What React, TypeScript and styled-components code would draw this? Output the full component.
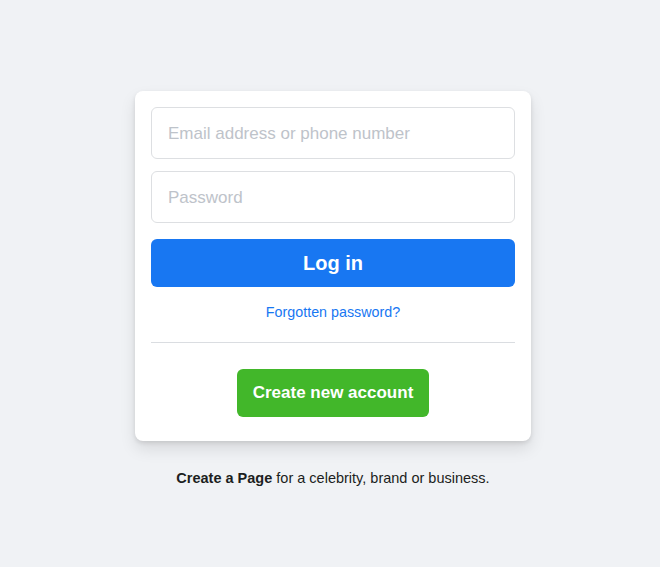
import React from 'react'
import styled, { createGlobalStyle } from 'styled-components'

const GlobalStyle = createGlobalStyle`
  html, body {
    margin: 0;
    padding: 0;
    background: #f0f2f5;
    font-family: "Liberation Sans", Arial, Helvetica, sans-serif;
  }
`

const Page = styled.div`
  min-height: 567px;
  box-sizing: border-box;
  padding: 91px 0 0 6px;
  display: flex;
  flex-direction: column;
  align-items: center;
`

const Card = styled.form`
  width: 396px;
  box-sizing: border-box;
  background: #fff;
  border-radius: 8px;
  box-shadow: 0 2px 4px rgba(0, 0, 0, 0.1), 0 8px 16px rgba(0, 0, 0, 0.1);
  padding: 16px 16px 24px;
  display: flex;
  flex-direction: column;
`

const Input = styled.input`
  height: 52px;
  box-sizing: border-box;
  border: 1px solid #dddfe2;
  border-radius: 6px;
  padding: 15px 16px 13px;
  font-family: inherit;
  font-size: 17px;
  color: #1d2129;
  outline: none;
  margin-bottom: ${(p: { $gap: number }) => p.$gap}px;

  &::placeholder {
    color: #bec3ca;
  }
`

const LoginButton = styled.button`
  height: 48px;
  border: none;
  border-radius: 6px;
  background: #1877f2;
  color: #fff;
  font-family: inherit;
  font-size: 20px;
  font-weight: bold;
  cursor: pointer;
`

const Forgot = styled.a`
  display: block;
  margin-top: 16px;
  text-align: center;
  font-size: 14.3px;
  line-height: 19px;
  color: #1877f2;
  text-decoration: none;
`

const Divider = styled.div`
  height: 1px;
  background: #dadde1;
  margin: 20px 0 26px;
`

const CreateButton = styled.button`
  align-self: center;
  height: 48px;
  padding: 0 16px;
  border: none;
  border-radius: 6px;
  background: #42b72a;
  color: #fff;
  font-family: inherit;
  font-size: 17px;
  font-weight: bold;
  cursor: pointer;
`

const Footnote = styled.p`
  margin: 28px 0 0;
  font-size: 14.5px;
  line-height: 19px;
  color: #1c1e21;

  b {
    font-weight: bold;
  }
`

export default function App() {
  return (
    <>
      <GlobalStyle />
      <Page>
        <Card onSubmit={(e) => e.preventDefault()}>
          <Input $gap={12} type="text" placeholder="Email address or phone number" />
          <Input $gap={16} type="password" placeholder="Password" />
          <LoginButton type="submit">Log in</LoginButton>
          <Forgot href="#">Forgotten password?</Forgot>
          <Divider />
          <CreateButton type="button">Create new account</CreateButton>
        </Card>
        <Footnote>
          <b>Create a Page</b> for a celebrity, brand or business.
        </Footnote>
      </Page>
    </>
  )
}
